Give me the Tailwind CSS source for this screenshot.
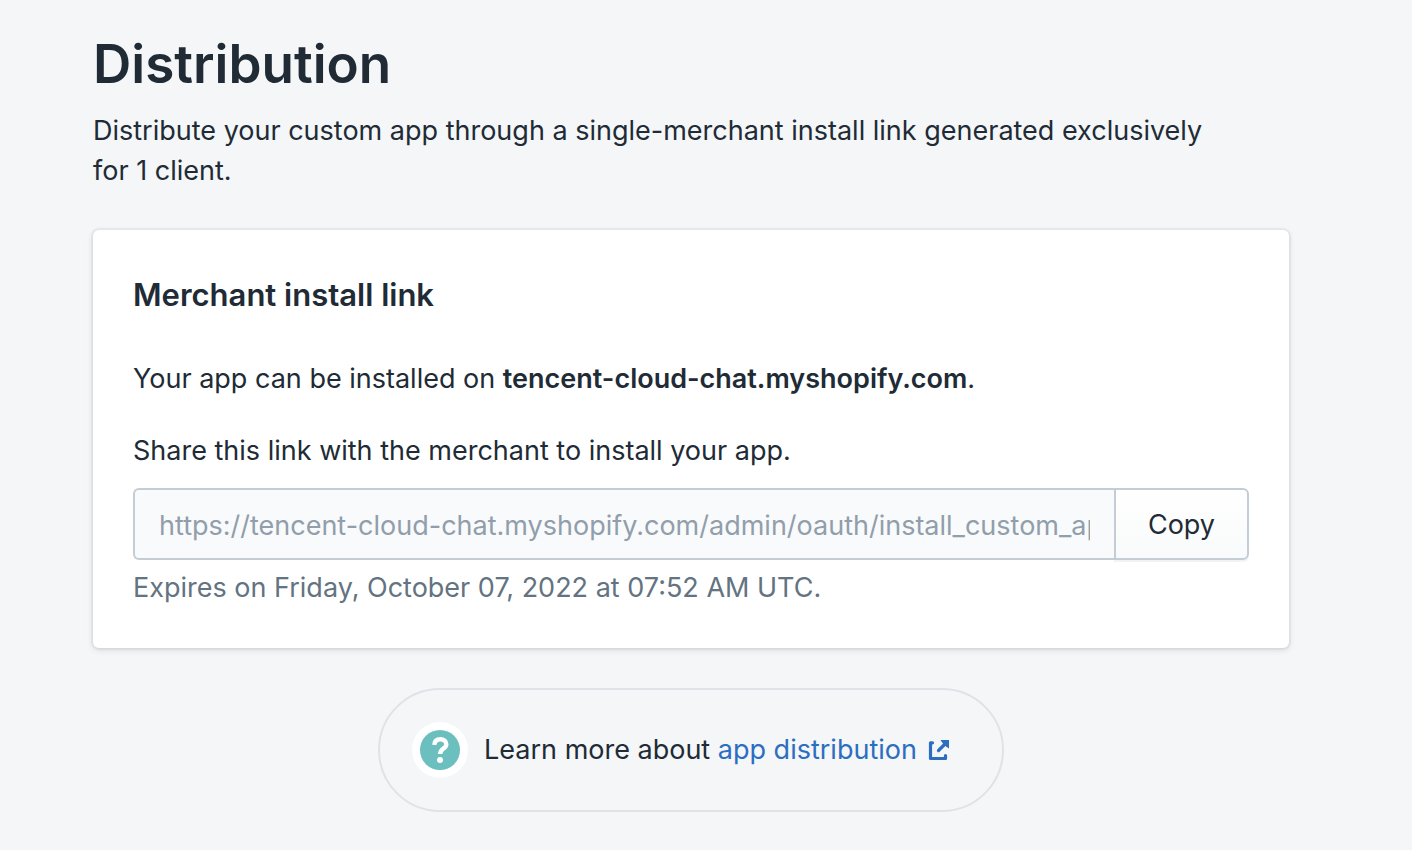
<!DOCTYPE html>
<html lang="en">
<head>
  <meta charset="UTF-8">
  <meta name="viewport" content="width=device-width, initial-scale=1.0">
  <title>Distribution</title>
  <script src="https://cdn.jsdelivr.net/npm/@tailwindcss/browser@4"></script>
</head>
<body class="min-h-screen bg-[#f4f6f8] font-[Inter,'Liberation_Sans',sans-serif] text-[27px] leading-10 text-[#212b36]">
  <main class="mr-[123px] ml-[93px] pt-8">
    <h1 class="text-[53px] leading-[64px] font-semibold">Distribution</h1>
    <p class="mt-[15px] max-w-[1140px]">Distribute your custom app through a single-merchant install link generated exclusively for 1 client.</p>

    <!-- Install link card -->
    <section class="mt-[39px] rounded-md bg-white p-10 shadow-[0_0_0_2px_rgba(63,63,68,0.05),0_2px_6px_rgba(63,63,68,0.15)]">
      <h2 class="mt-[5px] text-[31px] leading-10 font-semibold">Merchant install link</h2>
      <p class="mt-11">Your app can be installed on <strong class="font-semibold">tencent-cloud-chat.myshopify.com</strong>.</p>
      <label for="installLink" class="mt-8 block">Share this link with the merchant to install your app.</label>
      <div class="mt-[17px] flex h-[72px]">
        <input id="installLink" type="text" disabled value="https://tencent-cloud-chat.myshopify.com/admin/oauth/install_custom_app" class="min-w-0 flex-1 rounded-l-md border-2 border-r-0 border-[#c4cdd5] bg-[#f9fafb] px-6 pt-1 text-[#919eab]">
        <button type="button" class="rounded-r-md border-2 border-[#c4cdd5] bg-linear-to-b from-white to-[#f9fafb] px-8 pt-[2px] shadow-[0_2px_0_rgba(22,29,37,0.05)]">Copy</button>
      </div>
      <p class="mt-2 text-[#637381]">Expires on Friday, October 07, 2022 at 07:52 AM UTC.</p>
    </section>

    <!-- Footer help -->
    <div class="mt-10 flex justify-center">
      <div class="flex h-[124px] items-center rounded-full border-2 border-[#dfe3e8] pr-[51px] pl-8">
        <svg class="mr-4 size-14" viewBox="0 0 56 56" fill="none" aria-hidden="true">
          <circle cx="28" cy="28" r="28" fill="#fff"/>
          <circle cx="28" cy="28" r="20" fill="#6bbfbe"/>
          <path d="M22.300 22.800C22.500 19 25 17.200 28.300 17.200C32 17.200 34.300 19.400 34.300 22.300C34.300 27 28.200 26.200 28.200 32" stroke="#fff" stroke-width="4.400"/>
          <circle cx="28" cy="38" r="3" fill="#fff"/>
        </svg>
        <p>Learn more about <a href="#" class="text-[#2c6ebf]">app distribution<svg class="ml-[10px] inline size-6 align-[-3px]" viewBox="0 0 24 24" fill="none" stroke="currentColor" stroke-width="3.200" stroke-linecap="round" stroke-linejoin="round" aria-hidden="true"><path d="M5.500 4.800H3.500V20.500H18.500V17.500M11.500 12.500 19 5"/><path d="M13.500 2H22V10.500L19 8.500 15.500 5Z" fill="currentColor" stroke="none"/></svg></a></p>
      </div>
    </div>
  </main>
</body>
</html>
